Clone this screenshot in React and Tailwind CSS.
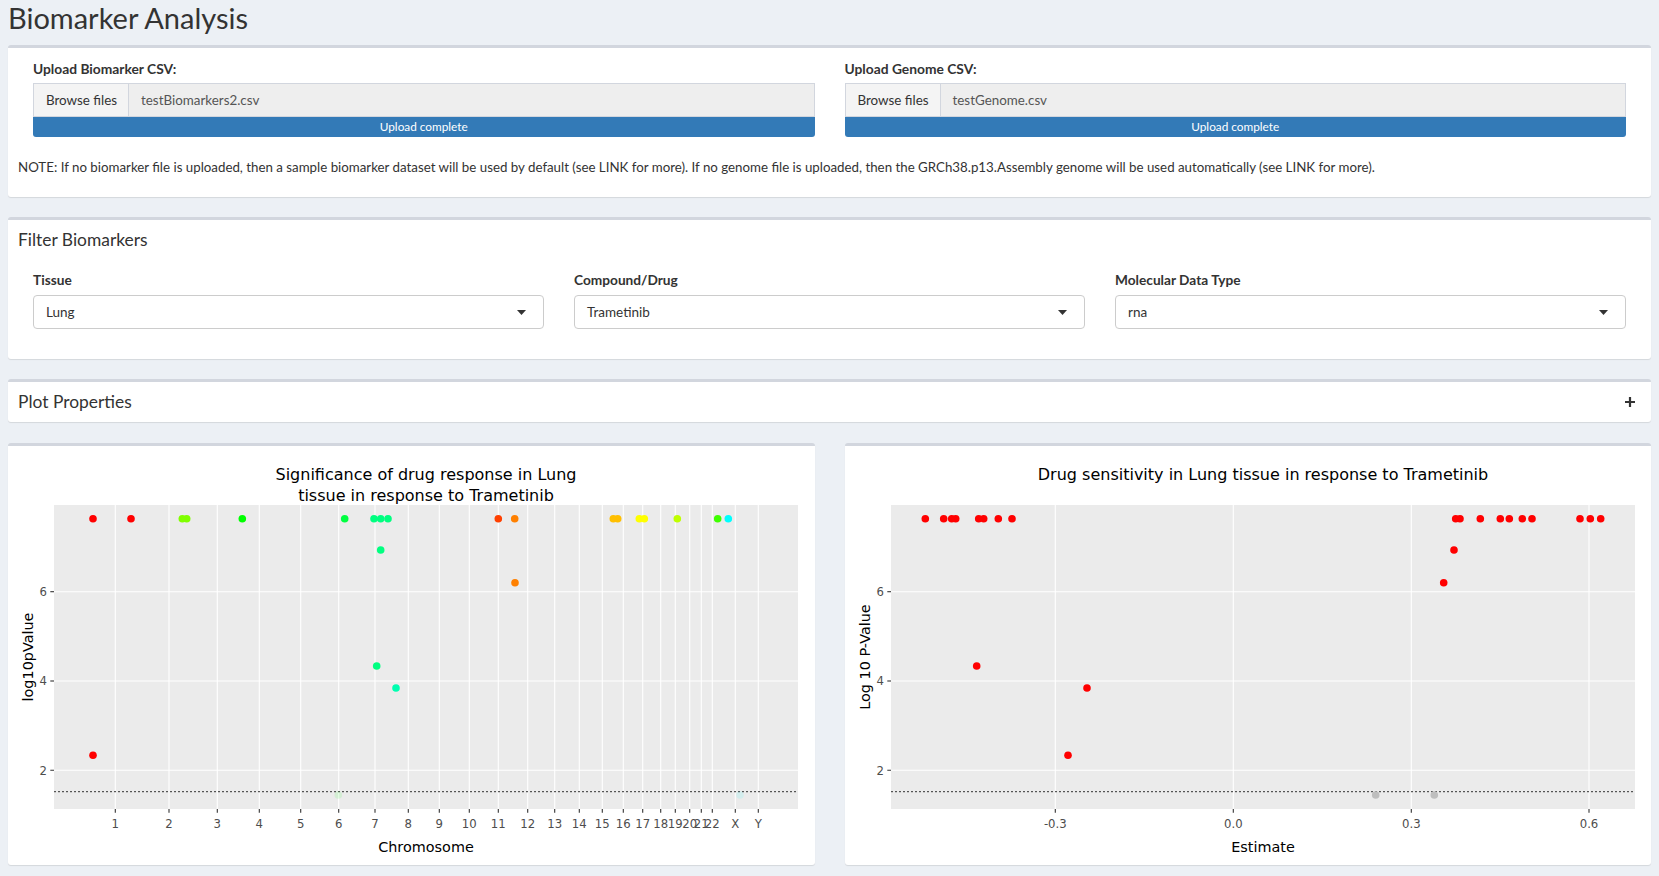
import React from 'react';

// chromosome manhattan-style plot data (local svg coords)
const chromTicks = [
  ['1', 107.3], ['2', 161], ['3', 209.3], ['4', 251.3], ['5', 292.7], ['6', 330.7],
  ['7', 367], ['8', 400.3], ['9', 431.3], ['10', 461.3], ['11', 490.3], ['12', 519.7],
  ['13', 546.7], ['14', 571.3], ['15', 594.3], ['16', 615.3], ['17', 634.7], ['18', 652.7],
  ['19', 667.3], ['20', 681.7], ['21', 693.3], ['22', 704.3], ['X', 727.3], ['Y', 750.3],
];

const TOP = 72.7;

const chromPoints = [
  [330.3, 349, '#00ff00', 0.1],
  [732, 349, '#00ffff', 0.1],
  [85, TOP, '#ff0000'], [123, TOP, '#ff0000'], [85, 309.3, '#ff0000'],
  [174.3, TOP, '#80ff00'], [178.7, TOP, '#80ff00'],
  [234.3, TOP, '#00ff00'],
  [336.7, TOP, '#00ff40'],
  [366, TOP, '#00ff80'], [372.7, TOP, '#00ff80'], [380, TOP, '#00ff80'],
  [372.7, 104, '#00ff80'], [368.7, 220, '#00ff80'], [388, 242, '#00ffb0'],
  [490.3, TOP, '#ff4000'], [506.7, TOP, '#ff8000'], [507, 136.7, '#ff8000'],
  [605.3, TOP, '#ffbf00'], [609.7, TOP, '#ffbf00'],
  [631.3, TOP, '#ffff00'], [636.3, TOP, '#ffff00'],
  [669.3, TOP, '#bfff00'], [709.7, TOP, '#40ff00'], [720.3, TOP, '#00ffff'],
];

const estTicks = [['-0.3', 210.3], ['0.0', 388.3], ['0.3', 566.3], ['0.6', 744]];

const estPoints = [
  [530.7, 349, '#bebebe'], [589.3, 349, '#bebebe'],
  ...[80.3, 98.7, 106.7, 110.7, 133.7, 138.7, 153.3, 167].map((x) => [x, TOP, '#ff0000']),
  ...[610.7, 615, 635.3, 655.3, 664.3, 677.3, 687, 735, 745.3, 755.7].map((x) => [x, TOP, '#ff0000']),
  [131.7, 220, '#ff0000'], [242, 242, '#ff0000'], [223, 309.3, '#ff0000'],
  [609, 104, '#ff0000'], [598.7, 136.7, '#ff0000'],
];

const yTicks = [['6', 145.7], ['4', 235], ['2', 324.3]];

function Plot({ title, xTicks, points, xTitle, yTitle }) {
  const x0 = 46, x1 = 790, y0 = 59, y1 = 363;
  return (
    <svg width={806} height={419} className="block" fontFamily="'DejaVu Sans', Verdana, sans-serif">
      {title.map((t, i) => (
        <text key={i} x={418} y={34 + i * 21.4} textAnchor="middle" fontSize={16} fill="#000">{t}</text>
      ))}
      <rect x={x0} y={y0} width={x1 - x0} height={y1 - y0} fill="#ebebeb" />
      {yTicks.map(([l, y]) => (
        <g key={l}>
          <line x1={x0} x2={x1} y1={y} y2={y} stroke="#fff" strokeWidth={1.1} />
          <line x1={42.3} x2={x0} y1={y} y2={y} stroke="#333" strokeWidth={1.1} />
          <text x={39} y={y + 4.2} textAnchor="end" fontSize={11.7} fill="#4d4d4d">{l}</text>
        </g>
      ))}
      {xTicks.map(([l, x]) => (
        <g key={l}>
          <line x1={x} x2={x} y1={y0} y2={y1} stroke="#fff" strokeWidth={1.1} />
          <line x1={x} x2={x} y1={y1} y2={y1 + 3.7} stroke="#333" strokeWidth={1.1} />
          <text x={x} y={381.7} textAnchor="middle" fontSize={11.7} fill="#4d4d4d">{l}</text>
        </g>
      ))}
      <line x1={x0} x2={x1} y1={345.7} y2={345.7} stroke="#333" strokeWidth={1} strokeDasharray="2 2" />
      {points.map(([x, y, c, o], i) => (
        <circle key={i} cx={x} cy={y} r={3.8} fill={c} fillOpacity={o ?? 1} />
      ))}
      <text x={418} y={406} textAnchor="middle" fontSize={14.4} fill="#000">{xTitle}</text>
      <text transform="translate(25 211) rotate(-90)" textAnchor="middle" fontSize={14.4} fill="#000">{yTitle}</text>
    </svg>
  );
}

function Box({ className = '', children }) {
  return (
    <section className={`rounded-[3px] border-t-[3px] border-[#d2d6de] bg-white shadow-[0_1px_1px_rgba(0,0,0,0.1)] ${className}`}>
      {children}
    </section>
  );
}

function FileUpload({ label, file }) {
  return (
    <div className="px-[15px]">
      <div className="mb-1 text-[13.8px] font-bold leading-5 text-[#333]">{label}</div>
      <div className="flex h-[34px] text-[13.4px]">
        <div className="flex w-[96px] shrink-0 items-center border border-[#d2d6de] bg-[#f4f4f4] pl-3 text-[#333]">Browse files</div>
        <div className="flex flex-1 items-center border border-l-0 border-[#d2d6de] bg-[#eeeeee] pl-3 text-[#555]">{file}</div>
      </div>
      <div className="flex h-5 items-center justify-center rounded-b-[3px] bg-[#337ab7] text-[11.8px] text-white">Upload complete</div>
    </div>
  );
}

function Select({ label, value }) {
  return (
    <div className="px-[15px]">
      <div className="mb-[5px] text-[13.7px] font-bold leading-5 text-[#333]">{label}</div>
      <div className="flex h-[34px] items-center justify-between rounded-[4px] border border-[#cccccc] bg-white pl-3 pr-[17px] text-[13.5px] text-[#333]">
        <span>{value}</span>
        <svg width="9" height="5" viewBox="0 0 9 5"><path d="M0 0h9L4.5 5z" fill="#333" /></svg>
      </div>
    </div>
  );
}

export default function App() {
  return (
    <div className="min-h-screen w-full bg-[#ecf0f5] font-['Lato',sans-serif] text-[#333]">
      <h2 className="px-2 text-[29px] font-normal leading-[36px]">Biomarker Analysis</h2>
      <div className="flex flex-col gap-5 px-2 pt-[9px]">
        <Box className="px-[10px] pb-5 pt-[11px]">
          <div className="grid grid-cols-2">
            <FileUpload label="Upload Biomarker CSV:" file="testBiomarkers2.csv" />
            <FileUpload label="Upload Genome CSV:" file="testGenome.csv" />
          </div>
          <p className="mt-5 text-[13.3px] leading-5 text-[#333]">
            NOTE: If no biomarker file is uploaded, then a sample biomarker dataset will be used by default (see LINK for more). If no genome file is uploaded, then the GRCh38.p13.Assembly genome will be used automatically (see LINK for more).
          </p>
        </Box>

        <Box>
          <div className="px-[10px] py-[10px]">
            <h3 className="text-[17.4px] font-normal leading-5">Filter Biomarkers</h3>
          </div>
          <div className="grid grid-cols-3 px-[10px] pb-[30px] pt-[10px]">
            <Select label="Tissue" value="Lung" />
            <Select label="Compound/Drug" value="Trametinib" />
            <Select label="Molecular Data Type" value="rna" />
          </div>
        </Box>

        <Box>
          <div className="flex items-center justify-between py-[10px] pl-[10px] pr-4">
            <h3 className="text-[17.4px] font-normal leading-5">Plot Properties</h3>
            <svg width="10" height="10" viewBox="0 0 10 10"><path d="M5 0v10M0 5h10" stroke="#333" strokeWidth="2.2" /></svg>
          </div>
        </Box>

        <div className="mt-px grid grid-cols-2 gap-[30px]">
          <Box className="overflow-hidden">
            <Plot
              title={['Significance of drug response in Lung', 'tissue in response to Trametinib']}
              xTicks={chromTicks}
              points={chromPoints}
              xTitle="Chromosome"
              yTitle="log10pValue"
            />
          </Box>
          <Box className="overflow-hidden">
            <Plot
              title={['Drug sensitivity in Lung tissue in response to Trametinib']}
              xTicks={estTicks}
              points={estPoints}
              xTitle="Estimate"
              yTitle="Log 10 P-Value"
            />
          </Box>
        </div>
      </div>
    </div>
  );
}
